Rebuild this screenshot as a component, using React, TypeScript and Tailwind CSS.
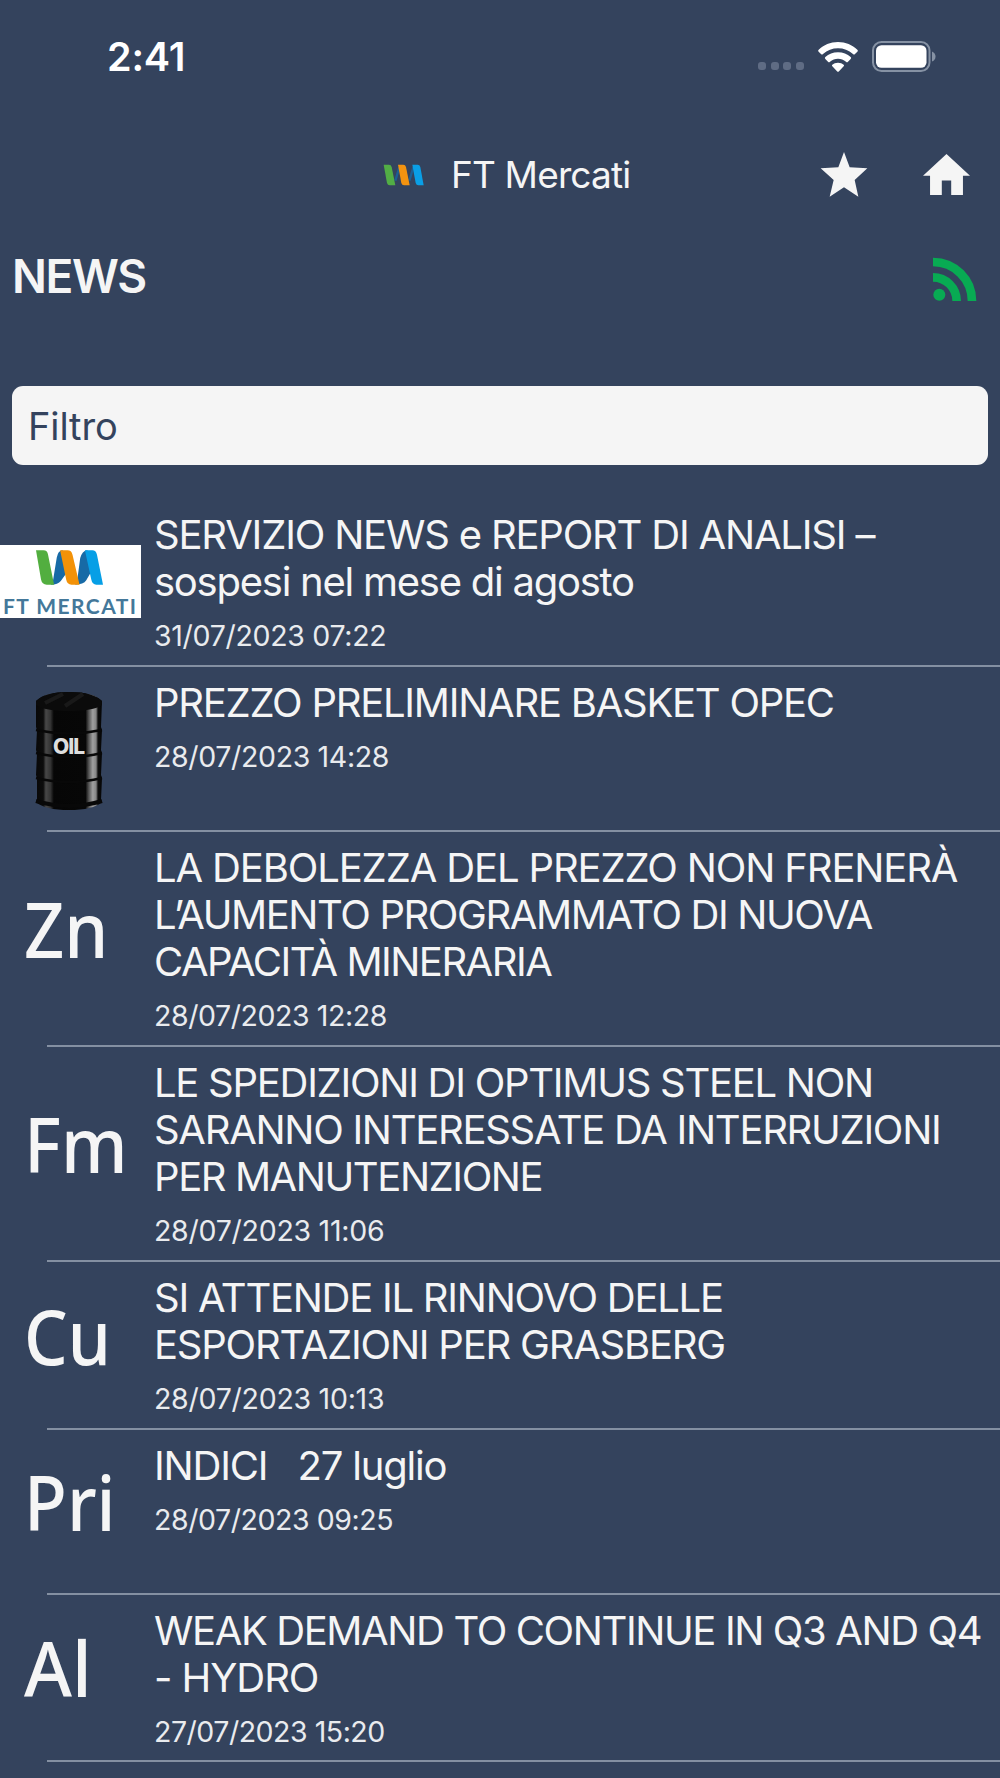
import type { ReactNode } from "react";

type Line = [text: string, tracking: string];

type Item = {
  icon: ReactNode;
  lines: Line[];
  date: Line;
  height: string;
};

function MercatiMark({ className }: { className: string }) {
  return (
    <svg className={className} viewBox="0 0 200 104" preserveAspectRatio="none">
      <path d="M50 96 L62 22 Q66 3 78 1 L90 8 L96 62 L74 92 Q66 103 44 103 Z" fill="#176aa6" />
      <path d="M122 98 L132 24 Q138 3 152 1 L164 8 L170 56 L150 90 Q142 103 116 103 Z" fill="#176aa6" />
      <path d="M0 1 H22 Q34 1 36 14 L54 103 H32 Q18 103 15 88 Z" fill="#52ae3f" />
      <path d="M72 1 H94 Q106 1 109 14 L130 103 H106 Q93 103 90 88 Z" fill="#f39208" />
      <path d="M146 1 H168 Q179 1 182 14 L200 103 H180 Q168 103 165 88 Z" fill="#069fe6" />
    </svg>
  );
}

function SmallMark() {
  return (
    <svg className="h-[22px] w-[41px]" viewBox="0 0 123 66">
      <path d="M37 50 L49 10 M79 50 L91 10" stroke="#1c5f94" strokeWidth="7" />
      <path d="M2 2 H18 Q24 2 26 9 L37 64 H20 Q14 64 12 57 Z" fill="#52ae45" />
      <path d="M45 2 H61 Q67 2 69 9 L80 64 H63 Q57 64 55 57 Z" fill="#f39310" />
      <path d="M88 2 H104 Q110 2 112 9 L122 64 H106 Q100 64 98 57 Z" fill="#0a9fe6" />
    </svg>
  );
}

function CompanyLogo() {
  return (
    <div className="mb-[2px] flex h-[73px] w-[140.5px] flex-col items-center bg-white pt-[5px]">
      <MercatiMark className="ml-[-1px] h-[35px] w-[67px]" />
      <span className="mt-[9px] font-['Lato',sans-serif] text-[21px] leading-[24px] font-bold tracking-[1.45px] whitespace-nowrap text-[#44789a]">
        FT MERCATI
      </span>
    </div>
  );
}

function OilBarrel() {
  return (
    <svg className="mt-[4px] ml-[35px] h-[118px] w-[68px]" viewBox="0 0 68 118">
      <defs>
        <linearGradient id="barrel" x1="0" x2="1" y1="0" y2="0">
          <stop offset="0" stopColor="#080808" />
          <stop offset="0.11" stopColor="#0c0c0c" />
          <stop offset="0.15" stopColor="#484848" />
          <stop offset="0.22" stopColor="#333" />
          <stop offset="0.27" stopColor="#060606" />
          <stop offset="0.75" stopColor="#070707" />
          <stop offset="0.8" stopColor="#555" />
          <stop offset="0.86" stopColor="#a0a0a0" />
          <stop offset="0.91" stopColor="#858585" />
          <stop offset="0.94" stopColor="#0c0c0c" />
          <stop offset="1" stopColor="#050505" />
        </linearGradient>
      </defs>
      <path
        d="M1 9 Q10 0 34 0 Q58 0 67 9 L66 35 L67 38 L66 58 L67 61 L66 83 L67 86 L66 108 L67 110 Q58 118 34 118 Q10 118 1 110 L2 107 L2 86 L1 83 L2 61 L1 58 L2 38 L1 35 Z"
        fill="url(#barrel)"
      />
      <path d="M1 9 Q10 0 34 0 Q58 0 67 9 V13 Q58 19 34 19 Q10 19 1 13 Z" fill="#0b0b0b" />
      <path d="M10 11 L28 2 M30 14 L48 2" stroke="#191919" strokeWidth="4" />
      <g fill="none" stroke="#080808" strokeWidth="2.5">
        <path d="M1 38 Q34 45 67 38" />
        <path d="M1 61 Q34 69 67 61" />
        <path d="M1 86 Q34 94 67 86" />
        <path d="M1 109 Q34 119 67 109" strokeWidth="4" />
      </g>
      <text
        x="34"
        y="62"
        textAnchor="middle"
        textLength="32"
        fontFamily="Inter, sans-serif"
        fontWeight="800"
        fontSize="21"
        fill="#dedede"
      >
        OIL
      </text>
    </svg>
  );
}

function Symbol({ children, className = "scale-x-[0.93]" }: { children: ReactNode; className?: string }) {
  return (
    <span
      className={`mt-[1px] ml-[24px] origin-left pb-[20px] font-['Noto_Sans',sans-serif] text-[75.6px] leading-[100px] font-medium ${className}`}
    >
      {children}
    </span>
  );
}

const items: Item[] = [
  {
    icon: <CompanyLogo />,
    lines: [
      ["SERVIZIO NEWS e REPORT DI ANALISI –", "tracking-[-1.19px]"],
      ["sospesi nel mese di agosto", "tracking-[-1.25px]"],
    ],
    date: ["31/07/2023 07:22", "tracking-[-0.3px]"],
    height: "h-[168px]",
  },
  {
    icon: <OilBarrel />,
    lines: [["PREZZO PRELIMINARE BASKET OPEC", "tracking-[-1.25px]"]],
    date: ["28/07/2023 14:28", "tracking-[-0.35px]"],
    height: "h-[165px]",
  },
  {
    icon: <Symbol>Zn</Symbol>,
    lines: [
      ["LA DEBOLEZZA DEL PREZZO NON FRENERÀ", "tracking-[-1.13px]"],
      ["L’AUMENTO PROGRAMMATO DI NUOVA", "tracking-[-1.4px]"],
      ["CAPACITÀ MINERARIA", "tracking-[-1.52px]"],
    ],
    date: ["28/07/2023 12:28", "tracking-[-0.42px]"],
    height: "h-[215px]",
  },
  {
    icon: <Symbol>Fm</Symbol>,
    lines: [
      ["LE SPEDIZIONI DI OPTIMUS STEEL NON", "tracking-[-1.27px]"],
      ["SARANNO INTERESSATE DA INTERRUZIONI", "tracking-[-1.29px]"],
      ["PER MANUTENZIONE", "tracking-[-1.42px]"],
    ],
    date: ["28/07/2023 11:06", "tracking-[-0.26px]"],
    height: "h-[215px]",
  },
  {
    icon: <Symbol className="scale-x-[0.91]">Cu</Symbol>,
    lines: [
      ["SI ATTENDE IL RINNOVO DELLE", "tracking-[-1.26px]"],
      ["ESPORTAZIONI PER GRASBERG", "tracking-[-1.22px]"],
    ],
    date: ["28/07/2023 10:13", "tracking-[-0.26px]"],
    height: "h-[168px]",
  },
  {
    icon: <Symbol>Pri</Symbol>,
    lines: [["INDICI   27 luglio", "tracking-[-1.19px]"]],
    date: ["28/07/2023 09:25", "tracking-[-0.43px]"],
    height: "h-[165px]",
  },
  {
    icon: <Symbol className="scale-x-[0.97]">Al</Symbol>,
    lines: [
      ["WEAK DEMAND TO CONTINUE IN Q3 AND Q4", "tracking-[-1.39px]"],
      ["- HYDRO", "tracking-[-1.05px]"],
    ],
    date: ["27/07/2023 15:20", "tracking-[-0.48px]"],
    height: "h-[167px]",
  },
];

function NewsRow({ item }: { item: Item }) {
  return (
    <li className={`flex flex-col ${item.height}`}>
      <div className="flex min-h-0 flex-1">
        <div className="flex w-[154px] shrink-0 items-center">{item.icon}</div>
        <div className="flex flex-col pt-[12px]">
          {item.lines.map(([text, tracking]) => (
            <span key={text} className={`text-[40px] leading-[47px] whitespace-pre ${tracking}`}>
              {text}
            </span>
          ))}
          <span
            className={`mt-[13px] text-[28.5px] leading-[36px] whitespace-pre text-[#e9ebee] ${item.date[1]}`}
          >
            {item.date[0]}
          </span>
        </div>
      </div>
      <div className="ml-[47px] h-[2px] shrink-0 bg-[#8490a2]" />
    </li>
  );
}

function StatusBar() {
  return (
    <div className="flex h-[113px] items-center justify-between pr-[64px] pl-[107px]">
      <span className="text-[39.5px] leading-[48px] font-semibold tracking-[-0.2px] text-white">2:41</span>
      <div className="flex items-center pb-px">
        <div className="mt-[20px] flex gap-[4.5px]">
          <i className="size-[8px] rounded-[3px] bg-[#5f6c84]" />
          <i className="size-[8px] rounded-[3px] bg-[#5f6c84]" />
          <i className="size-[8px] rounded-[3px] bg-[#5f6c84]" />
          <i className="size-[8px] rounded-[3px] bg-[#5f6c84]" />
        </div>
        <svg className="ml-[14.5px] h-[31px] w-[40px]" viewBox="0 0 120 93" fill="#fff">
          <path d="M60 3 C83 3 103 12 118 26 Q121 29 118 32 L111 39 Q108 42 105 39 C92 28 77 22 60 22 C43 22 28 28 15 39 Q12 42 9 39 L2 32 Q-1 29 2 26 C17 12 37 3 60 3 Z" />
          <path d="M60 34 C75 34 88 39 98 48 Q101 51 98 54 L90 62 Q87 65 84 62 C77 56 69 53 60 53 C51 53 43 56 36 62 Q33 65 30 62 L22 54 Q19 51 22 48 C32 39 45 34 60 34 Z" />
          <path d="M60 65 C67 65 73 67 77 71 Q79 73 77 76 L63 91 Q60 94 57 91 L43 76 Q41 73 43 71 C47 67 53 65 60 65 Z" />
        </svg>
        <svg className="ml-[14px] h-[31px] w-[64px]" viewBox="0 0 64 31">
          <rect x="1" y="1" width="56.5" height="29" rx="8.5" fill="none" stroke="#8692a4" strokeWidth="2" />
          <rect x="4" y="4.2" width="50.5" height="22.6" rx="5.5" fill="#fff" />
          <path d="M60 10.5 Q63.5 12 63.5 15.5 Q63.5 19 60 20.5 Z" fill="#8692a4" />
        </svg>
      </div>
    </div>
  );
}

function Header() {
  return (
    <header className="flex h-[124px] items-center pr-[30px] pl-[383px]">
      <SmallMark />
      <h1 className="ml-[27px] text-[37px] leading-[44px] tracking-[-0.85px]">FT Mercati</h1>
      <div className="ml-auto flex items-center gap-[55px]">
        <svg className="size-[48px]" viewBox="0 0 144 144" fill="#f5f5f5">
          <path d="M72 3 L89 49 L142 52 L104 87 L115 137 L72 109 L29 137 L41 87 L2 52 L55 49 Z" />
        </svg>
        <svg className="mt-[-2px] h-[41px] w-[47px]" viewBox="2 3 20 17" preserveAspectRatio="none" fill="#f5f5f5">
          <path d="M10 20v-6h4v6h5v-8h3L12 3 2 12h3v8z" />
        </svg>
      </div>
    </header>
  );
}

function NewsHeading() {
  return (
    <div className="flex h-[78px] items-center justify-between pr-[23px] pl-[12px]">
      <h2 className="text-[46px] leading-[56px] font-semibold tracking-[-1.4px]">NEWS</h2>
      <svg className="mt-[5px] h-[44px] w-[44px]" viewBox="0 0 132 132">
        <g fill="none" stroke="#08ab53" strokeWidth="26">
          <path d="M0 15 A117 117 0 0 1 117 132" />
          <path d="M0 61 A71 71 0 0 1 71 132" />
        </g>
        <circle cx="19" cy="113" r="18" fill="#08ab53" />
      </svg>
    </div>
  );
}

export default function App() {
  return (
    <div className="h-[1778px] w-[1000px] overflow-hidden bg-[#34435d] font-['Inter',sans-serif] text-[#f5f5f5]">
      <StatusBar />
      <Header />
      <NewsHeading />
      <input
        type="text"
        placeholder="Filtro"
        className="mt-[71px] ml-[12px] block h-[79px] w-[976px] rounded-[11px] bg-[#f5f5f5] px-[16px] text-[38px] tracking-[-0.1px] text-[#34435d] outline-none placeholder:text-[#34435d]"
      />
      <ul className="mt-[34px]">
        {items.map((item) => (
          <NewsRow key={item.date[0]} item={item} />
        ))}
      </ul>
    </div>
  );
}
